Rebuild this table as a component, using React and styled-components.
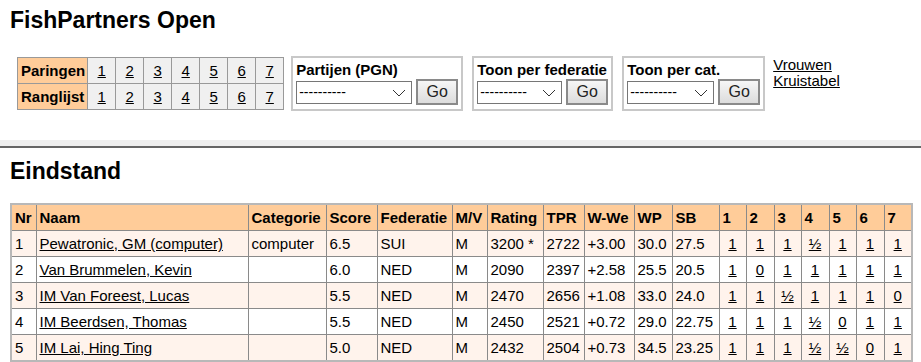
import React from 'react'
import styled, { createGlobalStyle } from 'styled-components'

const Global = createGlobalStyle`
  body {
    margin: 0;
    background: #fff;
    color: #000;
    font-family: 'Liberation Sans', Arial, sans-serif;
    font-size: 15px;
  }
  a {
    color: #000;
    text-decoration: underline;
  }
`

const rounds = [1, 2, 3, 4, 5, 6, 7]

const players = [
  { nr: 1, name: 'Pewatronic, GM (computer)', cat: 'computer', score: '6.5', fed: 'SUI', mv: 'M', rating: '3200 *', tpr: '2722', wwe: '+3.00', wp: '30.0', sb: '27.5', res: ['1', '1', '1', '½', '1', '1', '1'] },
  { nr: 2, name: 'Van Brummelen, Kevin', cat: '', score: '6.0', fed: 'NED', mv: 'M', rating: '2090', tpr: '2397', wwe: '+2.58', wp: '25.5', sb: '20.5', res: ['1', '0', '1', '1', '1', '1', '1'] },
  { nr: 3, name: 'IM Van Foreest, Lucas', cat: '', score: '5.5', fed: 'NED', mv: 'M', rating: '2470', tpr: '2656', wwe: '+1.08', wp: '33.0', sb: '24.0', res: ['1', '1', '½', '1', '1', '1', '0'] },
  { nr: 4, name: 'IM Beerdsen, Thomas', cat: '', score: '5.5', fed: 'NED', mv: 'M', rating: '2450', tpr: '2521', wwe: '+0.72', wp: '29.0', sb: '22.75', res: ['1', '1', '1', '½', '0', '1', '1'] },
  { nr: 5, name: 'IM Lai, Hing Ting', cat: '', score: '5.0', fed: 'NED', mv: 'M', rating: '2432', tpr: '2504', wwe: '+0.73', wp: '34.5', sb: '23.25', res: ['1', '1', '1', '½', '½', '0', '1'] },
]

const columns = [
  { label: 'Nr', w: 25 },
  { label: 'Naam', w: 212 },
  { label: 'Categorie', w: 78 },
  { label: 'Score', w: 51 },
  { label: 'Federatie', w: 75 },
  { label: 'M/V', w: 35 },
  { label: 'Rating', w: 56 },
  { label: 'TPR', w: 41 },
  { label: 'W-We', w: 50 },
  { label: 'WP', w: 38 },
  { label: 'SB', w: 47 },
  { label: '1', w: 27 },
  { label: '2', w: 28 },
  { label: '3', w: 27 },
  { label: '4', w: 28 },
  { label: '5', w: 27 },
  { label: '6', w: 28 },
  { label: '7', w: 28 },
]

export default function App() {
  return (
    <>
      <Global />
      <Top>
        <Title>FishPartners Open</Title>
        <Controls>
          <NavTable>
            <tbody>
              <tr>
                <NavHead>Paringen</NavHead>
                {rounds.map((r) => (
                  <NavCell key={r}>
                    <a href='#'>{r}</a>
                  </NavCell>
                ))}
              </tr>
              <tr>
                <NavHead>Ranglijst</NavHead>
                {rounds.map((r) => (
                  <NavCell key={r}>
                    <a href='#'>{r}</a>
                  </NavCell>
                ))}
              </tr>
            </tbody>
          </NavTable>
          <FormBox label='Partijen (PGN)' selectWidth={116} />
          <FormBox label='Toon per federatie' selectWidth={85} />
          <FormBox label='Toon per cat.' selectWidth={87} />
          <Links>
            <a href='#'>Vrouwen</a>
            <a href='#'>Kruistabel</a>
          </Links>
        </Controls>
      </Top>
      <Band />
      <Main>
        <Heading>Eindstand</Heading>
        <Standings>
          <colgroup>
            {columns.map((c) => (
              <col key={c.label} style={{ width: c.w }} />
            ))}
          </colgroup>
          <thead>
            <tr>
              {columns.map((c) => (
                <Th key={c.label}>{c.label}</Th>
              ))}
            </tr>
          </thead>
          <tbody>
            {players.map((p) => (
              <Row key={p.nr} odd={p.nr % 2 === 1}>
                <Td>{p.nr}</Td>
                <Td>
                  <a href='#'>{p.name}</a>
                </Td>
                <Td>{p.cat}</Td>
                <Td>{p.score}</Td>
                <Td>{p.fed}</Td>
                <Td>{p.mv}</Td>
                <Td>{p.rating}</Td>
                <Td>{p.tpr}</Td>
                <Td>{p.wwe}</Td>
                <Td>{p.wp}</Td>
                <Td>{p.sb}</Td>
                {p.res.map((r, i) => (
                  <Td key={i} center>
                    <a href='#'>{r}</a>
                  </Td>
                ))}
              </Row>
            ))}
          </tbody>
        </Standings>
      </Main>
    </>
  )
}

function FormBox({ label, selectWidth }) {
  return (
    <Box>
      <BoxLabel>{label}</BoxLabel>
      <BoxRow>
        <SelectWrap width={selectWidth}>
          <Select>
            <option>----------</option>
          </Select>
          <Chevron width='14' height='8' viewBox='0 0 14 8'>
            <path d='M1 1 L7 7 L13 1' fill='none' stroke='#333' strokeWidth='1' />
          </Chevron>
        </SelectWrap>
        <GoButton type='button'>Go</GoButton>
      </BoxRow>
    </Box>
  )
}

const Top = styled.header`
  padding: 7px 10px 29px;
`
const Title = styled.h1`
  margin: 0;
  font-size: 23px;
  line-height: 26px;
  font-weight: bold;
`
const Controls = styled.div`
  margin-top: 23px;
  display: flex;
  align-items: flex-start;
  padding-left: 7px;
`
const NavTable = styled.table`
  border-collapse: collapse;
  border: 1px solid #b0b0b0;
  margin-right: 7px;
  margin-top: 1px;
`
const NavHead = styled.td`
  background: #ffcc99;
  font-weight: bold;
  padding: 0 2px 0 3px;
  height: 25px;
  border: 1px solid #999;
`
const NavCell = styled.td`
  background: #f0f0f0;
  width: 27px;
  text-align: center;
  padding: 0;
  border: 1px solid #999;
`
const Box = styled.div`
  border: 2px solid #c8c8c8;
  padding: 3px 3px 4px 3px;
  margin-right: 9px;
  display: flex;
  flex-direction: column;
`
const BoxLabel = styled.div`
  font-weight: bold;
  line-height: 18px;
  white-space: nowrap;
`
const BoxRow = styled.div`
  display: flex;
  align-items: center;
  gap: 4px;
`
const SelectWrap = styled.div`
  position: relative;
  width: ${(p) => p.width}px;
`
const Select = styled.select`
  appearance: none;
  width: 100%;
  height: 23px;
  border: 1px solid #767676;
  border-radius: 0;
  background: #fff;
  font-family: 'Liberation Sans', Arial, sans-serif;
  font-size: 14px;
  padding: 0 2px;
  color: #000;
`
const Chevron = styled.svg`
  position: absolute;
  right: 6px;
  top: 8px;
  pointer-events: none;
`
const GoButton = styled.button`
  width: 42px;
  height: 26px;
  border: 2px solid #8a8a8a;
  background: linear-gradient(#f6f6f6, #dcdcdc);
  font-family: 'Liberation Sans', Arial, sans-serif;
  font-size: 16px;
  color: #222;
  padding: 0;
`
const Links = styled.div`
  display: flex;
  flex-direction: column;
  line-height: 16px;
  padding-top: 1px;
  margin-left: -1px;
`
const Band = styled.div`
  height: 6px;
  background: #efefef;
  border-bottom: 2px solid #666;
`
const Main = styled.main`
  padding: 10px 10px 0;
`
const Heading = styled.h2`
  margin: 0 0 19px;
  font-size: 23px;
  line-height: 26px;
  font-weight: bold;
`
const Standings = styled.table`
  border-collapse: collapse;
  table-layout: fixed;
  width: 901px;
  border: 2px solid #b8b8b8;
`
const Th = styled.th`
  background: #ffcc99;
  text-align: left;
  font-weight: bold;
  padding: 4px 3px;
  line-height: 17px;
  border: 1px solid #8a8a8a;
  white-space: nowrap;
  overflow: hidden;
`
const Row = styled.tr`
  background: ${(p) => (p.odd ? '#fff3ec' : '#fff')};
`
const Td = styled.td`
  padding: 4px 3px;
  line-height: 17px;
  border: 1px solid #8a8a8a;
  white-space: nowrap;
  overflow: hidden;
  text-align: ${(p) => (p.center ? 'center' : 'left')};
`
